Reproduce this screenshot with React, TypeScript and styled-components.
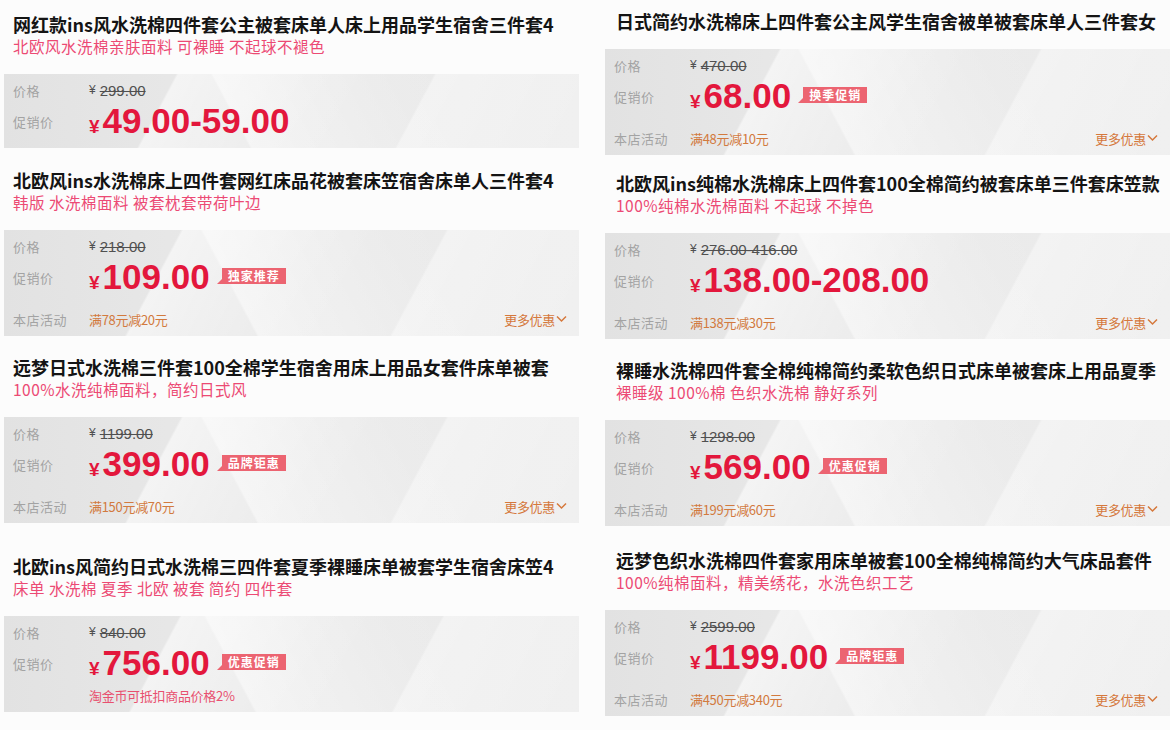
import React from "react";
import styled, { createGlobalStyle } from "styled-components";

const Global = createGlobalStyle`
  html, body { margin: 0; padding: 0; background: #fcfcfc; }
  body { width: 1170px; height: 730px; overflow: hidden; font-family: "Noto Sans CJK SC", "Liberation Sans", sans-serif; }
`;

type Item = {
  title: string;
  sub?: string;
  orig: string;
  price: string;
  badge?: string;
  activity?: string;
  note?: string;
  gap: number;
};

const leftItems: Item[] = [
  { title: "网红款ins风水洗棉四件套公主被套床单人床上用品学生宿舍三件套4", sub: "北欧风水洗棉亲肤面料 可裸睡 不起球不褪色", orig: "299.00", price: "49.00-59.00", gap: 13 },
  { title: "北欧风ins水洗棉床上四件套网红床品花被套床笠宿舍床单人三件套4", sub: "韩版 水洗棉面料 被套枕套带荷叶边", orig: "218.00", price: "109.00", badge: "独家推荐", activity: "满78元减20元", gap: 21 },
  { title: "远梦日式水洗棉三件套100全棉学生宿舍用床上用品女套件床单被套", sub: "100%水洗纯棉面料，简约日式风", orig: "1199.00", price: "399.00", badge: "品牌钜惠", activity: "满150元减70元", gap: 20 },
  { title: "北欧ins风简约日式水洗棉三四件套夏季裸睡床单被套学生宿舍床笠4", sub: "床单 水洗棉 夏季 北欧 被套 简约 四件套", orig: "840.00", price: "756.00", badge: "优惠促销", note: "淘金币可抵扣商品价格2%", gap: 32 },
];

const rightItems: Item[] = [
  { title: "日式简约水洗棉床上四件套公主风学生宿舍被单被套床单人三件套女", orig: "470.00", price: "68.00", badge: "换季促销", activity: "满48元减10元", gap: 10 },
  { title: "北欧风ins纯棉水洗棉床上四件套100全棉简约被套床单三件套床笠款", sub: "100%纯棉水洗棉面料 不起球 不掉色", orig: "276.00-416.00", price: "138.00-208.00", activity: "满138元减30元", gap: 17 },
  { title: "裸睡水洗棉四件套全棉纯棉简约柔软色织日式床单被套床上用品夏季", sub: "裸睡级 100%棉 色织水洗棉 静好系列", orig: "1298.00", price: "569.00", badge: "优惠促销", activity: "满199元减60元", gap: 20 },
  { title: "远梦色织水洗棉四件套家用床单被套100全棉纯棉简约大气床品套件", sub: "100%纯棉面料，精美绣花，水洗色织工艺", orig: "2599.00", price: "1199.00", badge: "品牌钜惠", activity: "满450元减340元", gap: 23 },
];

const Page = styled.div`
  display: flex;
  gap: 26px;
  padding-left: 4px;
  width: 1170px;
  box-sizing: border-box;
`;

const Column = styled.div<{ $width: number; $inset: number }>`
  display: flex;
  flex-direction: column;
  width: ${(p) => p.$width}px;
  flex: none;
  --inset: ${(p) => p.$inset}px;
`;

const Card = styled.section<{ $gap: number }>`
  display: flex;
  flex-direction: column;
  margin-top: ${(p) => p.$gap}px;
`;

const Title = styled.h2`
  margin: 0;
  padding-left: var(--inset);
  font-family: "Noto Sans CJK SC", sans-serif;
  font-size: 18px;
  font-weight: 700;
  line-height: 22px;
  color: #141414;
  white-space: nowrap;
  letter-spacing: 0;
`;

const Subtitle = styled.p`
  margin: 0;
  padding-left: var(--inset);
  font-family: "Noto Sans CJK SC", sans-serif;
  font-size: 15.5px;
  line-height: 22px;
  color: #ec4a74;
  white-space: nowrap;
  letter-spacing: 0.5px;
`;

const Panel = styled.div`
  margin-top: 17px;
  display: flex;
  flex-direction: column;
  padding: 6px 12px 6px 9px;
  background-color: #e7e7e7;
  background-image:
    linear-gradient(118deg, rgba(255,255,255,0) 0%, rgba(255,255,255,0) 28%, rgba(255,255,255,0.55) 28.4%, rgba(255,255,255,0.1) 52%, rgba(255,255,255,0) 60%),
    linear-gradient(62deg, rgba(255,255,255,0) 40%, rgba(255,255,255,0.45) 40.4%, rgba(255,255,255,0.05) 70%, rgba(255,255,255,0) 80%),
    linear-gradient(118deg, rgba(255,255,255,0) 70%, rgba(255,255,255,0.4) 70.4%, rgba(255,255,255,0.2) 100%),
    linear-gradient(90deg, #e2e2e2 0%, #e9e9e9 40%, #ececec 100%);
`;

const Row = styled.div<{ $h: number; $mt?: number }>`
  display: grid;
  grid-template-columns: 76px 1fr auto;
  align-items: center;
  height: ${(p) => p.$h}px;
  margin-top: ${(p) => p.$mt ?? 0}px;
`;

const Label = styled.span`
  font-family: "Noto Sans CJK SC", sans-serif;
  font-size: 13px;
  color: #a3a3a3;
  letter-spacing: 0.5px;
`;

const Original = styled.span`
  font-family: "Liberation Sans", sans-serif;
  font-size: 15px;
  color: #505050;
  display: flex;
  align-items: center;
  gap: 4px;
`;

const Yen = styled.span<{ $size: number }>`
  font-family: "Liberation Sans", sans-serif;
  font-size: ${(p) => p.$size}px;
`;

const Struck = styled.span`
  text-decoration: line-through;
  text-decoration-thickness: 1px;
`;

const PriceWrap = styled.div`
  display: flex;
  align-items: center;
`;

const Price = styled.span`
  display: flex;
  align-items: baseline;
  gap: 3px;
  color: #e3173c;
  font-family: "Liberation Sans", sans-serif;
  font-weight: 700;
`;

const Big = styled.span`
  font-size: 35px;
  line-height: 40px;
  letter-spacing: 0;
`;

const Badge = styled.span`
  position: relative;
  margin-left: 12px;
  margin-bottom: 3px;
  height: 16px;
  padding: 0 6px;
  background: #ec6471;
  color: #fff;
  font-family: "Noto Sans CJK SC", sans-serif;
  font-size: 12px;
  font-weight: 700;
  line-height: 16px;
  letter-spacing: 1px;
  &::before {
    content: "";
    position: absolute;
    left: -5px;
    bottom: 0;
    width: 0;
    height: 0;
    border-left: 5px solid transparent;
    border-bottom: 5px solid #ec6471;
  }
`;

const Activity = styled.span<{ $tone: string }>`
  font-family: "Noto Sans CJK SC", sans-serif;
  font-size: 13px;
  color: ${(p) => p.$tone};
  letter-spacing: -0.3px;
`;

const More = styled.span`
  display: flex;
  align-items: center;
  gap: 1px;
  font-family: "Noto Sans CJK SC", sans-serif;
  font-size: 13px;
  color: #d5783c;
  letter-spacing: -0.3px;
`;

const Chevron = () => (
  <svg width="11" height="8" viewBox="0 0 11 8" aria-hidden="true">
    <path d="M1 1.5 L5.5 6 L10 1.5" fill="none" stroke="#d5783c" strokeWidth="1.5" />
  </svg>
);

const ProductCard: React.FC<{ item: Item }> = ({ item }) => (
  <Card $gap={item.gap}>
    <Title>{item.title}</Title>
    {item.sub && <Subtitle>{item.sub}</Subtitle>}
    <Panel>
      <Row $h={20}>
        <Label>价格</Label>
        <Original>
          <Yen $size={12}>¥</Yen>
          <Struck>{item.orig}</Struck>
        </Original>
      </Row>
      <Row $h={42}>
        <Label>促销价</Label>
        <PriceWrap>
          <Price>
            <Yen $size={19}>¥</Yen>
            <Big>{item.price}</Big>
          </Price>
          {item.badge && <Badge>{item.badge}</Badge>}
        </PriceWrap>
      </Row>
      {item.activity && (
        <Row $h={22} $mt={10}>
          <Label>本店活动</Label>
          <Activity $tone="#d27a3e">{item.activity}</Activity>
          <More>
            更多优惠
            <Chevron />
          </More>
        </Row>
      )}
      {item.note && (
        <Row $h={22} $mt={0}>
          <span />
          <Activity $tone="#e8506f">{item.note}</Activity>
        </Row>
      )}
    </Panel>
  </Card>
);

export default function App() {
  return (
    <>
      <Global />
      <Page>
        <Column $width={575} $inset={9}>
          {leftItems.map((it) => (
            <ProductCard key={it.title} item={it} />
          ))}
        </Column>
        <Column $width={565} $inset={11}>
          {rightItems.map((it) => (
            <ProductCard key={it.title} item={it} />
          ))}
        </Column>
      </Page>
    </>
  );
}
